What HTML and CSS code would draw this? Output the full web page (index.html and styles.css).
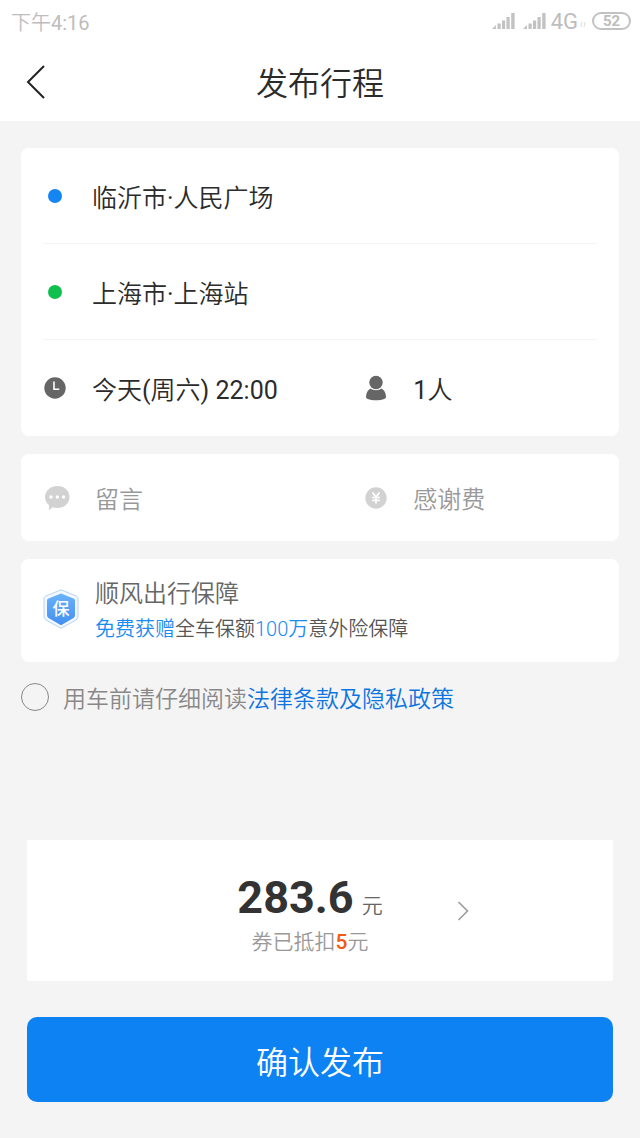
FILE: index.html
```html
<!DOCTYPE html>
<html lang="zh-CN">
<head>
<meta charset="utf-8">
<meta name="viewport" content="width=device-width, initial-scale=1">
<title>发布行程</title>
<link rel="stylesheet" href="styles.css">
</head>
<body>
<div class="page">
  <div class="status">
    <span class="status-time">下午<span class="latin">4:16</span></span>
    <div class="status-right">
      <svg class="signal" width="24" height="18" viewBox="0 0 24 18" aria-hidden="true"><path d="M0 17l4-4v4zM5.500 11.500h3.200V17H5.500zM10 8.500h3.200V17H10zM14.500 5h3.200v12h-3.200zM19.200 1h3.400v16h-3.400z"/></svg>
      <svg class="signal" width="24" height="18" viewBox="0 0 24 18" aria-hidden="true"><path d="M0 17l4-4v4zM5.500 11.500h3.200V17H5.500zM10 8.500h3.200V17H10zM14.500 5h3.200v12h-3.200zM19.200 1h3.400v16h-3.400z"/></svg>
      <span class="network">4G</span>
      <svg class="traffic" width="8" height="18" viewBox="0 0 8 18" aria-hidden="true"><path d="M2 15l1-5M5 15l1-5" /></svg>
      <span class="battery">52</span>
    </div>
  </div>
  <header class="header">
    <button class="back" type="button" aria-label="返回">
      <svg width="22" height="36" viewBox="0 0 22 36" aria-hidden="true"><path d="M19 1L3 17l16 16"/></svg>
    </button>
    <h1 class="title">发布行程</h1>
  </header>

  <main class="content">
    <section class="card">
      <button class="row" type="button"><span class="icon"><span class="dot dot-start"></span></span><span>临沂市<span class="latin">·</span>人民广场</span></button>
      <button class="row" type="button"><span class="icon"><span class="dot dot-end"></span></span><span>上海市<span class="latin">·</span>上海站</span></button>
      <div class="split">
        <button class="row" type="button">
          <span class="icon"><svg width="22" height="22" viewBox="0 0 22 22" aria-hidden="true"><circle cx="11" cy="11" r="10.700" fill="#666"/><path d="M10 4.500v7.700h5.300" fill="none" stroke="#fff" stroke-width="1.600"/></svg></span><span>今天<span class="latin">(</span>周六<span class="latin">) 22:00</span></span>
        </button>
        <button class="row" type="button">
          <span class="icon"><svg width="22" height="26" viewBox="0 0 22 26" aria-hidden="true"><circle cx="11" cy="7.500" r="6.700" fill="#666"/><path d="M5.500 13.500C8 15.800 14 15.800 16.500 13.500c3 1.500 4.500 5 4.500 8.500 0 2-4 3.200-10 3.200S1 24 1 22c0-3.500 1.500-7 4.500-8.500z" fill="#666"/></svg></span><span><span class="latin">1</span>人</span>
        </button>
      </div>
    </section>

    <section class="card card-extra">
      <div class="split">
        <button class="row row-muted" type="button">
          <span class="icon icon-wide"><svg width="26" height="26" viewBox="0 0 26 26" aria-hidden="true"><path d="M13.500 1C20.500 1 25.500 5.800 25.500 12s-5 11-12 11c-1.800 0-3.500-.3-5-.8L5 25.500l.2-5.200C2.700 18.300 1 15.400 1 12 1 5.800 6.500 1 13.500 1z" fill="#d2d2d2"/><g fill="#fff"><circle cx="7" cy="12" r="1.700"/><circle cx="13.300" cy="12" r="1.700"/><circle cx="19.600" cy="12" r="1.700"/></g></svg></span>留言
        </button>
        <button class="row row-muted" type="button">
          <span class="icon"><svg width="22" height="22" viewBox="0 0 22 22" aria-hidden="true"><circle cx="11" cy="11" r="10.700" fill="#d2d2d2"/><path d="M7.500 5.500L11 10l3.500-4.500M11 10v6.500M7.200 10.500h7.600M7.200 13.300h7.600" fill="none" stroke="#fff" stroke-width="1.700"/></svg></span>感谢费
        </button>
      </div>
    </section>

    <section class="card insurance">
      <span class="shield">
        <svg width="36" height="40" viewBox="0 0 36 40" aria-hidden="true">
          <defs><linearGradient id="shield-fill" x1="0" y1="0" x2="0" y2="1"><stop offset="0" stop-color="#6bb2f8"/><stop offset="1" stop-color="#438ff2"/></linearGradient></defs>
          <path d="M18 .8L33.500 7.200Q35 7.800 35 9.500v17.500Q35 29.500 33 31L18 39.300 3 31Q1 29.500 1 27V9.500Q1 7.800 2.500 7.200z" fill="#f2f8fe" stroke="#b4d4f5"/>
          <path d="M18 4.500L30.500 9.500Q32 10 32 11.500V26q0 2-1.500 3L18 36.300 5.500 29Q4 28 4 26V11.500Q4 10 5.500 9.500z" fill="url(#shield-fill)"/>
          <text class="shield-text" x="18" y="26" text-anchor="middle">保</text>
        </svg>
      </span>
      <div>
        <h2 class="insurance-title">顺风出行保障</h2>
        <p class="insurance-text"><span class="accent">免费获赠</span>全车保额<span class="accent">100万</span>意外险保障</p>
      </div>
    </section>

    <div class="terms">
      <input class="check" type="checkbox" id="agree">
      <div><label for="agree">用车前请仔细阅读</label><a class="link" href="#">法律条款及隐私政策</a></div>
    </div>
  </main>

  <footer class="footer">
    <button class="price" type="button">
      <span class="price-body">
        <span class="price-line"><strong class="amount">283.6</strong><span class="unit">元</span></span>
        <span class="coupon">券已抵扣<span class="discount">5</span>元</span>
      </span>
      <svg class="chevron" width="12" height="20" viewBox="0 0 12 20" aria-hidden="true"><path d="M1.500 1l9 9-9 9"/></svg>
    </button>
    <button class="submit" type="button">确认发布</button>
  </footer>
</div>
</body>
</html>
```
FILE: styles.css
```css
* { box-sizing: border-box; }
body {
  margin: 0;
  background: #f4f4f4;
  color: #2b2b2b;
  font-family: Roboto, "Noto Sans CJK SC", sans-serif;
  font-weight: 350;
}
button {
  margin: 0;
  padding: 0;
  border: 0;
  background: none;
  color: inherit;
  font: inherit;
  text-align: left;
}
h1, h2, p { margin: 0; font-weight: inherit; }
svg { display: block; }
.latin { font-weight: 400; }

.page {
  display: flex;
  flex-direction: column;
  min-height: 100vh;
}

.status {
  display: flex;
  justify-content: space-between;
  align-items: center;
  height: 44px;
  padding: 0 9px 2px 11px;
  background: #fff;
  color: #bdbdbd;
  font-size: 22px;
}
.status-time { font-size: 20px; }
.status-right { display: flex; align-items: center; gap: 7px; }
.signal { fill: #c2c2c2; }
.network { font-weight: 400; margin-left: -3px; }
.traffic { margin: 0 -2px 0 -6px; fill: none; stroke: #ddd; }
.battery {
  width: 39px;
  border: 2px solid #c2c2c2;
  border-radius: 9px;
  font-size: 15px;
  font-weight: 700;
  line-height: 14px;
  text-align: center;
}

.header {
  display: grid;
  grid-template-columns: 64px 1fr 64px;
  align-items: center;
  height: 77px;
  background: #fff;
}
.back { padding-left: 25px; }
.back path { fill: none; stroke: #222; stroke-width: 2; }
.title { padding-top: 2px; font-size: 32px; line-height: 44px; text-align: center; }

.content {
  display: flex;
  flex-direction: column;
  gap: 18px;
  padding: 27px 21px 0;
}
.card {
  padding: 0 22px;
  border-radius: 8px;
  background: #fff;
}
.row {
  display: flex;
  align-items: center;
  gap: 25px;
  width: 100%;
  height: 96px;
  font-size: 25px;
}
.card > .row { border-bottom: 1px solid #f5f5f5; }
.icon {
  display: flex;
  flex: none;
  justify-content: center;
  width: 24px;
}
.icon-wide { width: 27px; }
.dot { width: 14px; height: 14px; border-radius: 50%; }
.dot-start { background: #1485f2; }
.dot-end { background: #11bf4f; }
.split { display: grid; grid-template-columns: 58fr 42fr; }
.card-extra .row { height: 87px; }
.row-muted { color: #999; font-size: 24px; }

.insurance {
  display: flex;
  align-items: center;
  gap: 16px;
  min-height: 103px;
}
.shield { padding-bottom: 4px; }
.shield-text { fill: #fff; font-size: 17px; font-weight: 500; }
.insurance-title { color: #666; font-size: 24px; line-height: 36px; }
.insurance-text { color: #555; font-size: 20px; line-height: 34px; }
.accent { color: #1a8bf0; }

.terms {
  display: flex;
  align-items: flex-start;
  gap: 14px;
  color: #888;
  font-size: 23px;
  line-height: 40px;
}
.check {
  flex: none;
  width: 28px;
  height: 28px;
  margin: 3px 0 0;
  border: 1px solid #888;
  border-radius: 50%;
  appearance: none;
}
.check:checked { background: #0d82f2; }
.link { color: #0d75e0; text-decoration: none; }

.footer {
  display: flex;
  flex-direction: column;
  gap: 36px;
  margin-top: auto;
  padding: 0 27px 36px;
}
.price {
  display: grid;
  grid-template-columns: 1fr auto 1fr;
  align-items: center;
  height: 141px;
  background: #fff;
}
.price-body {
  display: flex;
  grid-column: 2;
  flex-direction: column;
  align-items: center;
  padding-right: 20px;
}
.price-line { display: flex; align-items: baseline; gap: 8px; line-height: 54px; }
.amount { color: #333; font-size: 45px; font-weight: 700; }
.unit { color: #666; font-size: 21px; }
.coupon { color: #999; font-size: 21px; line-height: 18px; }
.discount { color: #f05a14; font-weight: 500; }
.chevron { margin-left: 54px; fill: none; stroke: #999; stroke-width: 1.5; }
.submit {
  height: 85px;
  border-radius: 10px;
  background: #0d82f2;
  color: #fff;
  font-size: 32px;
  text-align: center;
}
```
